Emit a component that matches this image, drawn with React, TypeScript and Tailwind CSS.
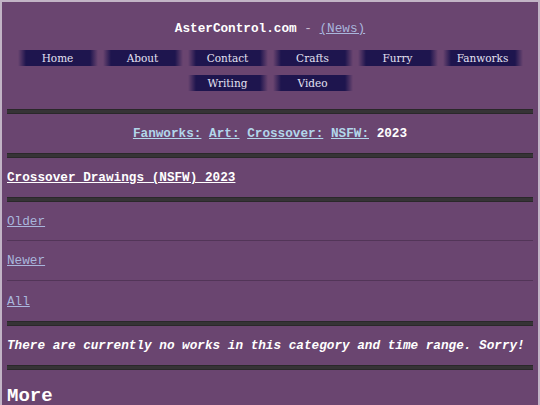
const NAV = [
  ["Home", "About", "Contact", "Crafts", "Furry", "Fanworks"],
  ["Writing", "Video"],
];

const CRUMBS = ["Fanworks:", "Art:", "Crossover:", "NSFW:"];

function Bar() {
  return <div className="h-[5px] bg-[#363336] border-y border-[#2a282a]" />;
}

function NavButton({ label }: { label: string }) {
  return (
    <a
      href="#"
      className="w-[80px] h-[16px] flex items-center justify-center text-[10.5px] text-[#e4e2f2] bg-[linear-gradient(to_right,#1e154e00,#1e154e_10%,#1e154e_90%,#1e154e00)]"
      style={{ fontFamily: '"DejaVu Serif", serif' }}
    >
      {label}
    </a>
  );
}

export default function App() {
  return (
    <div
      className="min-h-[405px] bg-[#6a4570] border-2 border-b-0 border-[#c2b4c6] px-[5px] text-white text-[12.7px] leading-[15px]"
      style={{ fontFamily: '"Liberation Mono", monospace' }}
    >
      <header className="pt-[19px] text-center">
        <span className="font-bold">AsterControl.com</span>
        <span className="text-[#cbbcd0]"> - </span>
        <a href="#" className="underline text-[#a9b6dc]">(News)</a>
      </header>

      <nav className="mt-[14px] flex flex-col items-center gap-[9px]">
        {NAV.map((row, i) => (
          <div key={i} className="flex gap-[5px]">
            {row.map((item) => (
              <NavButton key={item} label={item} />
            ))}
          </div>
        ))}
      </nav>

      <div className="mt-[18px]">
        <Bar />
      </div>

      <div className="py-[12px] text-center font-bold">
        {CRUMBS.map((c) => (
          <span key={c}>
            <a href="#" className="underline text-[#b2d6ea]">{c}</a>{" "}
          </span>
        ))}
        2023
      </div>

      <Bar />

      <h2 className="py-[12px] font-bold underline">Crossover Drawings (NSFW) 2023</h2>

      <Bar />

      <ul>
        <li className="h-[39px] flex items-center border-b border-[#523558]">
          <a href="#" className="underline text-[#a9b6dc]">Older</a>
        </li>
        <li className="h-[40px] flex items-center border-b border-[#523558]">
          <a href="#" className="underline text-[#a9b6dc]">Newer</a>
        </li>
        <li className="h-[40px] flex items-center">
          <a href="#" className="underline text-[#a9b6dc]">All</a>
        </li>
      </ul>

      <Bar />

      <p className="py-[12px] italic font-bold">
        There are currently no works in this category and time range. Sorry!
      </p>

      <Bar />

      <h2 className="pt-[15px] text-[19px] leading-[22px] font-bold">More</h2>
    </div>
  );
}
